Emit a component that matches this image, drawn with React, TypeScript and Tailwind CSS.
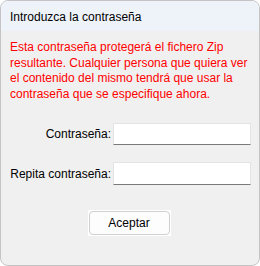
export default function App() {
  return (
    <div className="w-[260px] h-[266px] flex flex-col rounded-[8px] border border-[#c4c4c4] overflow-hidden bg-[#f0f0f0] text-[12px] text-black [font-family:'Liberation_Sans',Arial,sans-serif]">
      {/* title bar */}
      <div className="h-[30px] shrink-0 flex items-center px-[9px] pt-[2px] bg-[#eef3fa]">
        <span>Introduzca la contraseña</span>
      </div>

      <div className="flex flex-col px-[9px] pt-[9px]">
        <p className="text-[#ff0000] leading-[15.5px]">
          Esta contraseña protegerá el fichero Zip resultante. Cualquier persona que quiera ver el
          contenido del mismo tendrá que usar la contraseña que se especifique ahora.
        </p>

        <div className="grid grid-cols-[101px_138px] gap-x-[2px] gap-y-[17px] items-center mt-[21px]">
          <label className="text-right">Contraseña:</label>
          <input
            type="password"
            className="h-[22px] bg-white border border-[#e3e3e3] border-b-[#7a7a7a] outline-none"
          />
          <label className="text-right whitespace-nowrap">Repita contraseña:</label>
          <input
            type="password"
            className="h-[23px] bg-white border border-[#e3e3e3] border-b-[#7a7a7a] outline-none"
          />
        </div>

        <div className="flex justify-center mt-[25px] pr-[2px]">
          <div className="bg-white p-px">
            <button
              type="button"
              className="w-[81px] h-[24px] rounded-[4px] border border-[#d0d0d0] bg-[#fdfdfd] text-[12px]"
            >
              Aceptar
            </button>
          </div>
        </div>
      </div>
    </div>
  )
}
